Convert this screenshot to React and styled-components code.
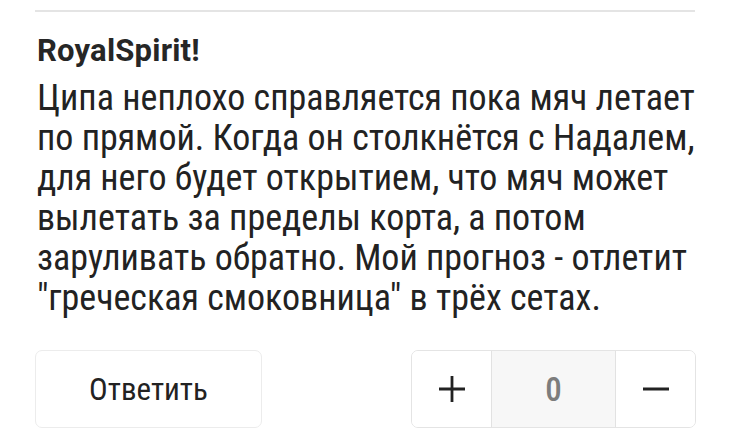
import React from "react";
import styled, { createGlobalStyle } from "styled-components";

const Global = createGlobalStyle`
  html, body { margin: 0; padding: 0; background: #fff; }
  body { font-family: Roboto, "Noto Sans", sans-serif; color: #222; }
`;

const Card = styled.div`
  width: 661px;
  margin-left: 35px;
  padding-top: 10px;
`;

const Separator = styled.hr`
  margin: 0 1px 0 0;
  border: 0;
  border-top: 2px solid #e4e4e4;
`;

const Author = styled.div`
  margin-top: 22px;
  padding-left: 2px;
  font-size: 31px;
  line-height: 34px;
  font-weight: 700;
  letter-spacing: 0.2px;
  color: #262626;
`;

const Body = styled.p`
  margin: 10px 0 0;
  padding-left: 2px;
  font-size: 36px;
  line-height: 40px;
  font-weight: 400;
  font-stretch: 87.5%;
  color: #222;
`;

const Actions = styled.div`
  margin-top: 32px;
  display: flex;
  justify-content: space-between;
  align-items: center;
`;

const ReplyButton = styled.button`
  width: 227px;
  height: 78px;
  border: 1.5px solid #ececec;
  border-radius: 7px;
  background: #fff;
  font-family: Roboto, sans-serif;
  font-size: 31px;
  font-stretch: 87.5%;
  color: #222;
  padding: 0;
`;

const Voter = styled.div`
  display: flex;
  height: 78px;
  width: 285px;
  border: 1.5px solid #e4e4e4;
  border-radius: 7px;
  overflow: hidden;
  box-sizing: border-box;
`;

const VoteButton = styled.button`
  width: 79px;
  border: 0;
  background: #fff;
  display: flex;
  align-items: center;
  justify-content: center;
  padding: 0;
`;

const Count = styled.div`
  flex: 1;
  background: #f7f7f7;
  border-left: 1.5px solid #e2e2e2;
  border-right: 1.5px solid #e2e2e2;
  display: flex;
  align-items: center;
  justify-content: center;
  font-size: 33px;
  font-weight: 500;
  font-stretch: 87.5%;
  color: #7d7d7d;
`;

export default function App() {
  return (
    <>
      <Global />
      <Card>
        <Separator />
        <Author>RoyalSpirit!</Author>
        <Body>
          Ципа неплохо справляется пока мяч летает по прямой. Когда он столкнётся с Надалем,
          для него будет открытием, что мяч может вылетать за пределы корта, а потом
          заруливать обратно. Мой прогноз - отлетит "греческая смоковница" в трёх сетах.
        </Body>
        <Actions>
          <ReplyButton>Ответить</ReplyButton>
          <Voter>
            <VoteButton aria-label="plus">
              <svg width="28" height="28" viewBox="0 0 28 28">
                <path d="M14 1v26M1 14h26" stroke="#222" strokeWidth="2.8" />
              </svg>
            </VoteButton>
            <Count>0</Count>
            <VoteButton aria-label="minus">
              <svg width="28" height="28" viewBox="0 0 28 28">
                <path d="M1 14h26" stroke="#222" strokeWidth="3" />
              </svg>
            </VoteButton>
          </Voter>
        </Actions>
      </Card>
    </>
  );
}
